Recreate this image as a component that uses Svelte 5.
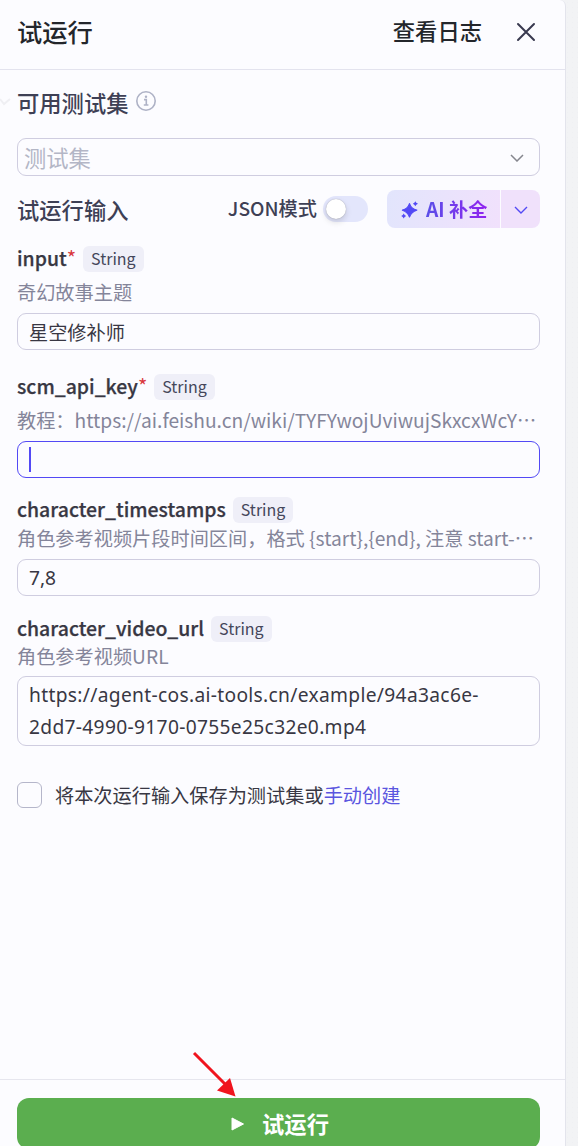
<script lang="ts">
	type Field = {
		name: string;
		required?: boolean;
		desc: string;
		value: string;
		focused?: boolean;
		multiline?: boolean;
	};

	let jsonMode = $state(false);
	let saveAsTestSet = $state(false);

	const fields: Field[] = [
		{ name: 'input', required: true, desc: '奇幻故事主题', value: '星空修补师' },
		{
			name: 'scm_api_key',
			required: true,
			desc: '教程：https://ai.feishu.cn/wiki/TYFYwojUviwujSkxcxWcY…',
			value: '',
			focused: true
		},
		{
			name: 'character_timestamps',
			desc: '角色参考视频片段时间区间，格式 {start},{end}, 注意 start-…',
			value: '7,8'
		},
		{
			name: 'character_video_url',
			desc: '角色参考视频URL',
			value: 'https://agent-cos.ai-tools.cn/example/94a3ac6e-\n2dd7-4990-9170-0755e25c32e0.mp4',
			multiline: true
		}
	];
</script>

<div class="page" lang="zh-CN">
	<div class="panel">
		<header>
			<h1>试运行</h1>
			<span class="log">查看日志</span>
			<svg class="close" width="20" height="20" viewBox="0 0 20 20">
				<path d="M2 2L18 18M18 2L2 18" />
			</svg>
		</header>

		<main>
			<svg class="ghost" width="12" height="8" viewBox="0 0 12 8"><path d="M1 1L5 6L11 1" /></svg>
			<div class="row sets">
				<h2>可用测试集</h2>
				<svg width="20" height="20" viewBox="0 0 20 20">
					<circle cx="10" cy="10" r="9.2" />
					<path d="M8 8.6H10.3V14M7.8 14H12.4" />
					<circle class="dot" cx="10" cy="5.8" r="1.2" />
				</svg>
			</div>
			<div class="select">
				<span>测试集</span>
				<svg width="14" height="8" viewBox="0 0 14 8"><path d="M1 1L7 7L13 1" /></svg>
			</div>

			<div class="row inputs">
				<h2>试运行输入</h2>
				<span class="json">JSON模式</span>
				<button class="switch" class:on={jsonMode} aria-label="JSON模式" onclick={() => (jsonMode = !jsonMode)}>
					<i></i>
				</button>
				<div class="ai">
					<div class="ai-main">
						<svg width="18" height="18" viewBox="0 0 18 18">
							<path
								class="star"
								d="M8.500 2.600C9.800 6.500 11.500 8 15.800 9.200C11.500 10.500 9.800 12 8.500 16C7.200 12 5.500 10.500 1.400 9.200C5.500 8 7.200 6.500 8.500 2.600Z"
							/>
							<path d="M14.300 .3Q14.900 2.100 17 2.700Q14.900 3.300 14.300 5.200Q13.700 3.300 11.800 2.700Q13.700 2.100 14.300 .3Z" />
							<path d="M2.700 12.600Q3.300 14.400 5.200 15Q3.300 15.600 2.700 17.500Q2.100 15.600 .2 15Q2.100 14.400 2.700 12.600Z" />
						</svg>
						<span>AI 补全</span>
					</div>
					<div class="ai-more">
						<svg width="14" height="8" viewBox="0 0 14 8"><path d="M1 1L7 7L13 1" /></svg>
					</div>
				</div>
			</div>

			{#each fields as field}
				<section class:required={field.required}>
					<div class="label">
						<b>{field.name}</b>
						{#if field.required}<em>*</em>{/if}
						<span class="tag">String</span>
					</div>
					<p>{field.desc}</p>
					<div class="box" class:focused={field.focused} class:multiline={field.multiline}>
						{#if field.focused}<i class="caret"></i>{:else}<span>{field.value}</span>{/if}
					</div>
				</section>
			{/each}

			<div class="save">
				<button
					class="check"
					class:checked={saveAsTestSet}
					aria-label="保存为测试集"
					onclick={() => (saveAsTestSet = !saveAsTestSet)}
				></button>
				<span>将本次运行输入保存为测试集或<a href="#create">手动创建</a></span>
			</div>
		</main>

		<footer>
			<button class="run">
				<svg width="14" height="16" viewBox="0 0 14 16"><path d="M1 2L12.5 8L1 14Z" /></svg>
				<span>试运行</span>
			</button>
			<svg class="arrow" width="46" height="48" viewBox="0 0 46 48">
				<path class="shaft" d="M2 2L33 33" />
				<path d="M43.500 45.500L25 39.500L38 27Z" />
			</svg>
		</footer>
	</div>
</div>

<style>
	:global(body) {
		margin: 0;
		overflow: hidden;
	}
	.page {
		height: 1146px;
		overflow: hidden;
		background-color: #f2f3f5;
		background-image: radial-gradient(#eff0f3 0.8px, transparent 1px);
		background-size: 5px 5px;
		font-family: 'Noto Sans CJK SC', sans-serif;
		color: #383743;
	}
	.panel {
		display: flex;
		flex-direction: column;
		box-sizing: border-box;
		width: 566px;
		height: 1146px;
		background: #fcfcff;
		border-right: 1px solid #e3e4ec;
		border-top-right-radius: 6px;
	}
	svg {
		display: block;
		flex: none;
		fill: none;
	}
	button {
		border: 0;
		padding: 0;
		font: inherit;
	}
	header {
		display: flex;
		align-items: center;
		box-sizing: border-box;
		height: 70px;
		padding: 0 29px 6px 17px;
		border-bottom: 1px solid #e3e3ee;
		color: #23262b;
	}
	h1 {
		flex: 1;
		margin: -1px 0 0;
		font-size: 25.3px;
		font-weight: 500;
		line-height: 38px;
	}
	.log {
		font-size: 22.3px;
		font-weight: 500;
		line-height: 34px;
		margin: -3px 34px 0 0;
	}
	.close path {
		stroke: #38394f;
		stroke-width: 2;
		stroke-linecap: round;
	}
	main {
		position: relative;
		flex: 1;
		padding: 0 25px 0 17px;
	}
	.ghost {
		position: absolute;
		left: -1px;
		top: 28px;
	}
	.ghost path {
		stroke: #efeff3;
		stroke-width: 2;
	}
	.row {
		display: flex;
		align-items: center;
	}
	h2 {
		margin: 0;
		font-size: 22.3px;
		font-weight: 500;
		line-height: 34px;
		color: #3e4055;
	}
	.sets {
		height: 68px;
	}
	.sets h2 {
		margin-top: -4px;
	}
	.sets svg {
		margin: -6px 0 0 7px;
		stroke: #aeb2c6;
		stroke-width: 1.6;
	}
	.sets .dot {
		fill: #aeb2c6;
		stroke: none;
	}
	.select {
		display: flex;
		align-items: center;
		justify-content: space-between;
		box-sizing: border-box;
		height: 38px;
		padding: 0 15px 0 6px;
		border: 1px solid #cfcde0;
		border-radius: 9px;
		font-size: 22.3px;
		color: #b3b6c6;
	}
	.select svg {
		margin-top: 1px;
		stroke: #85868e;
		stroke-width: 1.5;
	}
	.inputs {
		height: 38px;
		margin: 14px 0 18px;
	}
	.inputs h2 {
		flex: 1;
	}
	.json {
		margin-top: -2px;
		font-size: 19.2px;
		font-weight: 500;
		color: #3e4055;
	}
	.switch {
		width: 45px;
		height: 26px;
		margin: 0 19px 0 6px;
		border-radius: 13px;
		background: #e3e6fc;
	}
	.switch i {
		display: block;
		width: 20px;
		height: 20px;
		margin: -1px 0 0 3px;
		border-radius: 50%;
		background: #fff;
		box-shadow: 0 3px 6px rgba(0, 0, 0, 0.15), 0 0 1px rgba(0, 0, 0, 0.35);
	}
	.switch.on i {
		margin-left: 22px;
	}
	.ai {
		display: flex;
		gap: 1px;
		width: 153px;
		height: 38px;
		border-radius: 8px;
		overflow: hidden;
	}
	.ai-main {
		display: flex;
		align-items: center;
		width: 113px;
		background: linear-gradient(100deg, #e2e5fc, #f1e1fc);
	}
	.ai-main svg {
		margin: 1px 7px 0 14px;
		fill: #5349f5;
	}
	.star {
		stroke: #5349f5;
		stroke-width: 1.2;
		stroke-linejoin: round;
	}
	.ai-main span {
		font-size: 19.2px;
		font-weight: 700;
		background: linear-gradient(90deg, #5a4fe8, #9022ef);
		background-clip: text;
		color: transparent;
	}
	.ai-more {
		display: flex;
		flex: 1;
		align-items: center;
		justify-content: center;
		background: #f0e1fb;
	}
	.ai-more svg {
		margin-top: 2px;
		stroke: #5349f5;
		stroke-width: 1.4;
	}
	section {
		margin-bottom: 20px;
	}
	section:first-of-type {
		margin-bottom: 24px;
	}
	section:nth-of-type(2) {
		margin-bottom: 19px;
	}
	.label {
		display: flex;
		align-items: center;
		height: 26px;
	}
	.label b {
		margin-top: -3px;
		font-size: 19.45px;
		font-weight: 500;
		-webkit-text-stroke: 0.25px;
	}
	.label em {
		margin-top: -3px;
		font-size: 20px;
		font-style: normal;
		color: #d9383d;
	}
	.tag {
		height: 26px;
		margin-left: 7px;
		padding: 0 8px;
		border-radius: 6px;
		background: #efeff8;
		font-size: 16px;
		line-height: 25px;
		color: #44465a;
	}
	p {
		height: 36px;
		margin: 0;
		font-size: 19.2px;
		line-height: 30px;
		white-space: nowrap;
		color: #84859a;
	}
	.required p {
		height: 41px;
		line-height: 40px;
	}
	section:last-of-type p {
		height: 34px;
		line-height: 28px;
	}
	.box {
		display: flex;
		align-items: center;
		box-sizing: border-box;
		height: 37px;
		padding: 0 11px;
		border: 1px solid #cfcde0;
		border-radius: 9px;
		font-family: 'Noto Sans', 'Noto Sans CJK SC', sans-serif;
		font-size: 19.2px;
	}
	.focused {
		border-color: #5349f5;
	}
	.caret {
		width: 2px;
		height: 25px;
		background: #5349f5;
	}
	.multiline {
		height: 70px;
		line-height: 32px;
		letter-spacing: 0.32px;
		white-space: pre-line;
	}
	.save {
		display: flex;
		align-items: center;
		gap: 13px;
		margin-top: 36px;
		font-size: 19.2px;
		line-height: 26px;
	}
	.check {
		box-sizing: border-box;
		width: 25px;
		height: 26px;
		border: 1px solid #b5b6ca;
		border-radius: 6px;
		background: none;
	}
	.check.checked {
		background: #5349f5;
	}
	a {
		color: #5a55e0;
		text-decoration: none;
	}
	footer {
		position: relative;
		box-sizing: border-box;
		height: 67px;
		padding: 18px 25px 0 17px;
		border-top: 1px solid #e6e6ee;
	}
	.run {
		display: flex;
		align-items: center;
		justify-content: center;
		gap: 17px;
		width: 100%;
		height: 51px;
		padding-left: 3px;
		border-radius: 12px;
		background: #5bae4f;
		color: #fff;
		font-size: 22.3px;
		font-weight: 700;
	}
	.run span {
		margin-top: -2px;
	}
	.run path {
		fill: #fff;
		stroke: #fff;
		stroke-width: 1;
		stroke-linejoin: round;
	}
	.arrow {
		position: absolute;
		left: 192px;
		top: -29px;
		fill: #f0141e;
	}
	.shaft {
		stroke: #f0141e;
		stroke-width: 3;
	}
</style>
